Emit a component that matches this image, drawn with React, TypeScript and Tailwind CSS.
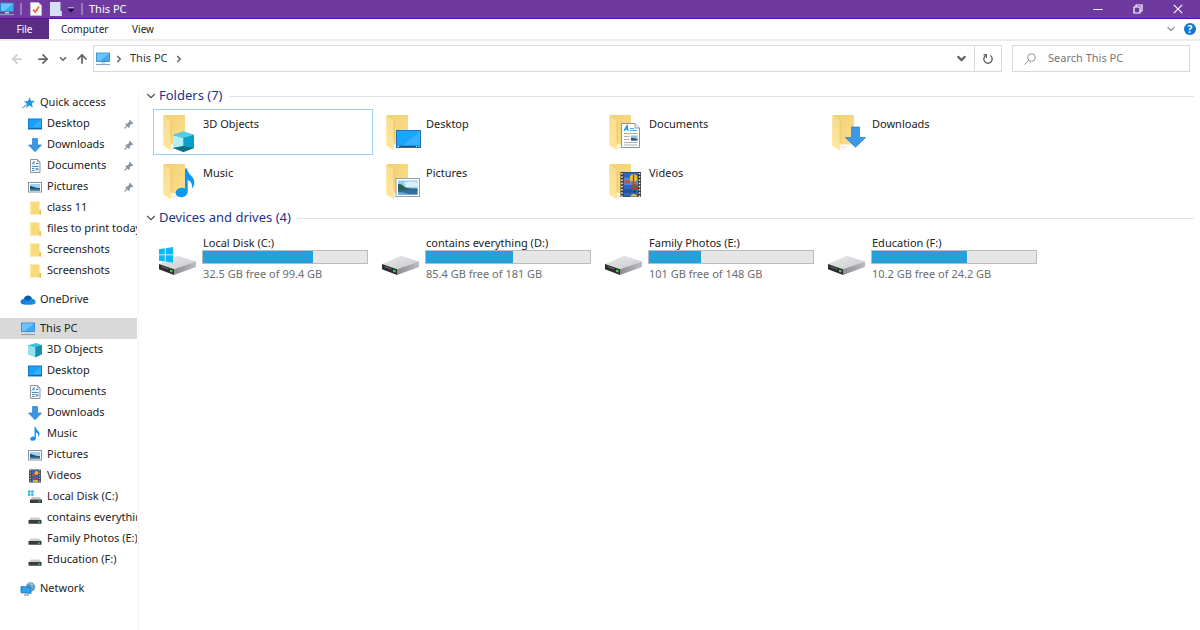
import type { ReactNode } from "react";
import { ChevronDown, ChevronRight, ArrowLeft, ArrowRight, ArrowUp } from "lucide-react";

/* Sidebar icons, 16x16 */

const MonitorIcon = () => (
  <svg width="16" height="16" viewBox="0 0 16 16" className="shrink-0">
    <rect x="1.5" y="2" width="13" height="8.5" fill="#3fa9f5" stroke="#2b86c5" strokeWidth=".8" />
    <path d="M2 2.5h12L5 10H2z" fill="#6cc4fb" />
    <path d="M6 11h4v1.500H6z" fill="#c3d3df" />
    <path d="M1 13.500h14" stroke="#8fa3b5" strokeWidth="1.200" />
  </svg>
);

const StarIcon = () => (
  <svg width="16" height="16" viewBox="0 0 16 16" className="shrink-0">
    <path d="M9.800 2l1 3.700 4.200.2-3.200 2.600 1.100 4-3.500-2.100-3.400 2.700 1.100-4.200L4 6.400l4-.4z" fill="#2196e8" />
    <path d="M2.500 13l4-3.500" stroke="#2b7cc0" />
  </svg>
);

const DesktopIcon = () => (
  <svg width="16" height="16" viewBox="0 0 16 16" className="shrink-0">
    <rect x="1.500" y="3" width="13" height="10" fill="#18a0fb" stroke="#1279cf" />
    <path d="M14 3.500V11L6 11z" fill="#35b0ff" />
    <path d="M1 12.500h14" stroke="#1565a8" />
  </svg>
);

const DownloadIcon = () => (
  <svg width="16" height="16" viewBox="0 0 16 16" className="shrink-0">
    <path d="M5.500 1.500h5v6.500h4L8 14.800 1.500 8h4z" fill="#3a96e4" stroke="#2b7fcb" strokeWidth=".7" />
  </svg>
);

const DocumentIcon = () => (
  <svg width="16" height="16" viewBox="0 0 16 16" className="shrink-0">
    <path d="M3.500 1.500h7l2.500 2.500v10.500H3.500z" fill="#fafafa" stroke="#8c959c" />
    <path d="M10.500 1.500v2.500H13" fill="none" stroke="#8c959c" strokeWidth=".8" />
    <path d="M5 6.500L7 3.500v3M9 5.500h2.500M5 8.500h6.500M5 10.500h2.500M5 12.500h2.500" stroke="#2f80c6" strokeWidth=".9" fill="none" />
    <path d="M8.500 10h3v2.500h-3z" fill="#7aa7cd" />
  </svg>
);

const PictureIcon = () => (
  <svg width="16" height="16" viewBox="0 0 16 16" className="shrink-0">
    <rect x="1.500" y="3.500" width="13" height="9.500" fill="#fff" stroke="#8b9298" />
    <rect x="3" y="5" width="10" height="6.500" fill="#9cd0f5" />
    <path d="M3 7c3 0 4 2 10 2v2.500H3z" fill="#2a5568" />
    <path d="M3 10.300h10v1.200H3z" fill="#3d83b8" />
  </svg>
);

const FolderIcon = () => (
  <svg width="16" height="16" viewBox="0 0 16 16" className="shrink-0">
    <path d="M3 1.500h9.500v8.500H14v4.500H3z" fill="#f8da7c" />
    <path d="M3 1.500l1.500 1v12L3 14z" fill="#fbe59a" />
    <path d="M12.500 10H14v4.500h-1.500z" fill="#e9bd4c" />
  </svg>
);

const CloudIcon = () => (
  <svg width="16" height="16" viewBox="0 0 16 16" className="shrink-0">
    <path d="M3.500 8C4 4.800 6 3.500 8 3.500c1.800 0 3.400 1 4 3l-3 5z" fill="#0a5cb0" />
    <path d="M4 12.500C1.800 12.500.6 11.200.6 9.700.6 8 2 6.900 3.700 7c1.300 0 2.800.8 4 2l4 3.500z" fill="#1481d8" />
    <path d="M4 12.500l7-5.500c2.200-.9 4.500.9 4.500 3 0 1.400-1.200 2.500-2.700 2.500z" fill="#1b8be4" />
  </svg>
);

const CubeIcon = () => (
  <svg width="16" height="16" viewBox="0 0 16 16" className="shrink-0">
    <path d="M1 3.500L9 1.200l6 2v8.800l-6 3.300-8-3z" fill="#20a9c7" />
    <path d="M1 3.500L8.500 5v10L1 12.300z" fill="#93e3ec" />
    <path d="M1 3.500L9 1.200l6 2L8.500 5z" fill="#42c6da" />
    <path d="M8.500 5L15 3.200V12l-6.500 3.300z" fill="#158fb4" />
  </svg>
);

const MusicIcon = () => (
  <svg width="16" height="16" viewBox="0 0 16 16" className="shrink-0">
    <path d="M7.500 1h1.200c.3 3 3.800 3.800 3.800 7 0 1.300-.6 2.300-1.300 3 .5-3-.8-4-2.300-4.500v5.800c0 1.500-1.300 2.500-3 2.500S3.200 14 3.200 12.900c0-1.400 1.500-2.400 3-2.400.5 0 1 .1 1.300.3z" fill="#1293ee" />
  </svg>
);

const VideoIcon = () => (
  <svg width="16" height="16" viewBox="0 0 16 16" className="shrink-0">
    <rect x="2" y="1.500" width="12" height="13" fill="#3c3c3c" />
    <rect x="4.500" y="2" width="7" height="12" fill="#2d63b8" />
    <circle cx="9.500" cy="5" r="2" fill="#e9bb28" />
    <path d="M5 6h3v1.800H5z" fill="#d8452f" />
    <path d="M7 9.500h4v2H7z" fill="#c33d2b" />
    <path d="M6 12h5v2H6z" fill="#e2b42a" />
    <path d="M3.200 2v12M12.800 2v12" stroke="#e2e2e2" strokeDasharray="1.300 1.300" />
  </svg>
);

const DriveIcon = () => (
  <svg width="16" height="16" viewBox="0 0 16 16" className="shrink-0">
    <path d="M4 7.500h8l2.500 3h-13z" fill="#c9cbcd" />
    <rect x="1.500" y="10" width="13" height="3.800" rx=".6" fill="#3a3d40" />
    <rect x="11" y="11.500" width="2" height="1.200" fill="#35d04c" />
  </svg>
);

const SystemDriveIcon = () => (
  <svg width="16" height="16" viewBox="0 0 16 16" className="shrink-0">
    <path d="M1 1.500h2.400v2.200H1zM4.200 1.500h2.400v2.200H4.200zM1 4.500h2.400v2.200H1zM4.200 4.500h2.400v2.200H4.200z" fill="#12aeea" />
    <path d="M5 8h7.500l2 2.700H3.500z" fill="#c4c6c8" />
    <rect x="3" y="10.400" width="12" height="3.600" rx=".6" fill="#3a3d40" />
    <rect x="11.500" y="11.800" width="2" height="1.200" fill="#35d04c" />
  </svg>
);

const NetworkIcon = () => (
  <svg width="16" height="16" viewBox="0 0 16 16" className="shrink-0">
    <circle cx="10.500" cy="6" r="4.700" fill="#5f95bf" />
    <path d="M8 2.500c2 1 5 0 6 2M10.500 1.500c2 3 2 6 0 9" stroke="#b7d4ea" strokeWidth=".8" fill="none" />
    <path d="M1 5.500l10 .8v6L1 11.800z" fill="#2fa2ee" stroke="#1b6fb0" strokeWidth=".8" />
    <path d="M4 14h5" stroke="#7f95a8" strokeWidth="1.200" />
  </svg>
);

const PinIcon = () => (
  <svg width="10" height="10" viewBox="0 0 10 10" className="shrink-0">
    <path d="M5.500.500l4 4-1.200.5-.8-.2L5.700 6.600l.1 1.600-.9.800-3.700-3.800.8-.8 1.600.1L5.400 2.600l-.3-.9z" fill="#8793a0" />
    <path d="M3.300 6.700L.5 9.500" stroke="#8793a0" strokeWidth="1.100" />
  </svg>
);

/* Folder tiles: a shared open folder with an overlay on its corner */

const FolderTileIcon = ({ children }: { children: ReactNode }) => (
  <svg width="48" height="46" viewBox="0 0 48 46" className="shrink-0">
    <defs>
      <linearGradient id="folder-back" x1="0" y1="0" x2="1" y2="1">
        <stop offset="0" stopColor="#f2cf72" />
        <stop offset="1" stopColor="#fbdf8c" />
      </linearGradient>
      <linearGradient id="folder-front" x1="0" y1="0" x2="0" y2="1">
        <stop offset="0" stopColor="#f8dc8e" />
        <stop offset="1" stopColor="#ffe79a" />
      </linearGradient>
    </defs>
    <path d="M18 37h9l-8 4z" fill="#eeeeee" />
    <path d="M11 6h21v29.500H17z" fill="url(#folder-back)" />
    <path d="M10.200 6.300L18 12v29.500l-7.800-5z" fill="url(#folder-front)" />
    <path d="M18 12v22" stroke="#e3b95b" strokeWidth=".6" />
    {children}
  </svg>
);

const CubeOverlay = () => (
  <>
    <path d="M20 26L30.500 22.500 41 26v13L30.500 43 20 39z" fill="#1ab1cf" />
    <path d="M20 26L30.500 29v8L20 39z" fill="#b4eff4" />
    <path d="M20 26L30.500 22.500 41 26 30.500 29z" fill="#50cfe0" />
    <path d="M30.500 29L41 26v13l-10.500-2z" fill="#0b9fc9" />
    <path d="M20 39l10.500-2L41 39 30.500 43z" fill="#0f6f83" />
  </>
);

const MusicOverlay = () => (
  <path
    d="M32 10.500h2c.4 5.500 7.300 7.500 7.300 14 0 2.500-1 4.500-2.300 6 .6-5-1.500-7.500-4.300-8.500v11.700c0 3-3 5.500-6.500 5.500-3 0-5.500-1.700-5.500-4.200 0-3 3-5.200 6.500-5.200 1 0 2 .2 2.800.6z"
    fill="#0c97f5"
  />
);

const DesktopOverlay = () => (
  <>
    <rect x="20.500" y="21.500" width="24" height="17" fill="#1aa5ff" stroke="#1a76b8" />
    <path d="M44 22v14L28 36z" fill="#35b1ff" />
    <path d="M20.500 37.500h24" stroke="#0e5c98" strokeWidth="1.400" />
    <path d="M21.500 37.500H23M40 37.500h1M42.500 37.500h1" stroke="#dcefff" />
  </>
);

const DocumentOverlay = () => (
  <>
    <path d="M22.500 14.500H36l4.500 4.500v19.500h-18z" fill="#fdfdfd" stroke="#8d9498" />
    <path d="M36 14.500V19h4.500" fill="#e8ebed" stroke="#8d9498" strokeWidth=".8" />
    <path d="M25 22l3-5.500 1 5.500M26 20.200h2.700" stroke="#168be0" strokeWidth="1.200" fill="none" />
    <path d="M31 19.500h4M31 21.500h7" stroke="#4aa7e8" />
    <path d="M25 24.500h13.500M25 27.500h5.500M25 30.500h5.500M25 33.500h13.500M25 36h13.500" stroke="#a9b1b8" />
    <rect x="32" y="26.500" width="6.500" height="4.800" fill="#8bbfe4" />
    <path d="M32 29c3-.5 4 1 6.500 1v1.500H32z" fill="#2a4d60" />
  </>
);

const DownloadOverlay = () => (
  <path d="M29.500 18h8v10.500h6.200L33.500 38.300 23.300 28.500h6.200z" fill="#3d98e8" stroke="#2a7dca" strokeWidth=".7" />
);

const PictureOverlay = () => (
  <>
    <rect x="20" y="20.500" width="23.500" height="18" fill="#fff" stroke="#9aa0a4" />
    <rect x="22" y="22.500" width="19.500" height="14" fill="#8fccf6" />
    <path d="M28 24.500c4-1.500 9-1 13.500-.5v5H30z" fill="#d9effc" />
    <path d="M22 26.500c2-1 4 0 6 2s8 2 13.500 2V33H22z" fill="#2f6152" />
    <path d="M22 32.500c6-.5 14-1.500 19.500-.5v4.500H22z" fill="#2f6ea6" />
    <path d="M22 34c5 0 8 1 12 2.500H22z" fill="#6ea9d4" />
  </>
);

const VideoOverlay = () => (
  <>
    <rect x="21.500" y="14" width="20.500" height="25" fill="#343434" />
    <rect x="24.500" y="14.500" width="14.500" height="24" fill="#2f66c2" />
    <path d="M25 20c4-2 8 3 14 1v6H25z" fill="#4f8bdc" />
    <path d="M24.500 31c3-1 5 2 9 0v4h-9z" fill="#2452a0" />
    <circle cx="34.500" cy="20" r="3.800" fill="#eec22d" />
    <path d="M33.800 16.500h1.400v7.500h-1.400z" fill="#6b5a20" />
    <path d="M33 24h3l-.8 2h-1.400z" fill="#d73c2b" />
    <path d="M25 22.500h6l-1 3h-4z" fill="#e0452f" />
    <circle cx="35.500" cy="29" r="3" fill="#ca3527" />
    <path d="M33 28.500h5v1.500h-5z" fill="#2a8044" />
    <path d="M34.500 32.500h2v2h-2z" fill="#20242b" />
    <path d="M31 38.500a4 4 0 0 1 7.500 0z" fill="#eec22d" />
    <path d="M23 15v24M40.500 15v24" stroke="#f0f0f0" strokeWidth="1.600" strokeDasharray="1.600 1.600" />
  </>
);

const DriveTileIcon = ({ system }: { system?: boolean }) => (
  <svg width="48" height="46" viewBox="0 0 48 46" className="shrink-0">
    <defs>
      <linearGradient id="drive-top" x1="0" y1="0" x2="1" y2="1">
        <stop offset="0" stopColor="#e9eaec" />
        <stop offset="1" stopColor="#c9cacd" />
      </linearGradient>
      <linearGradient id="drive-side" x1="0" y1="0" x2="1" y2="0">
        <stop offset="0" stopColor="#8c8d90" />
        <stop offset="1" stopColor="#bcbdc0" />
      </linearGradient>
    </defs>
    <path d="M6 29L25 20.700l18 5.800L21 34.500z" fill="url(#drive-top)" />
    <path d="M21 34.300l22-7.800V32L21 40z" fill="url(#drive-side)" />
    <path d="M6 29l15 5.300V40L6 34.300z" fill="#2b2c2e" />
    <path d="M8.500 31.700l7 2.500" stroke="#5b5d60" strokeWidth="1.300" />
    <path d="M17 34.500l2.500.8v2.200l-2.500-.8z" fill="#3bdb3f" />
    {system && (
      <path d="M6 14.200l5.800-.9v6.200H6zM12.600 13.200l7.400-1.200v7.500h-7.400zM6 20.300h5.800v6.200L6 25.700zM12.600 20.300H20V27.700l-7.400-1.100z" fill="#0db8f2" />
    )}
  </svg>
);

type TreeItem = { label: string; icon: ReactNode; pinned?: boolean };
type TreeGroup = { root: TreeItem; active?: boolean; items: TreeItem[] };

const tree: TreeGroup[] = [
  {
    root: { label: "Quick access", icon: <StarIcon /> },
    items: [
      { label: "Desktop", icon: <DesktopIcon />, pinned: true },
      { label: "Downloads", icon: <DownloadIcon />, pinned: true },
      { label: "Documents", icon: <DocumentIcon />, pinned: true },
      { label: "Pictures", icon: <PictureIcon />, pinned: true },
      { label: "class 11", icon: <FolderIcon /> },
      { label: "files to print today", icon: <FolderIcon /> },
      { label: "Screenshots", icon: <FolderIcon /> },
      { label: "Screenshots", icon: <FolderIcon /> },
    ],
  },
  { root: { label: "OneDrive", icon: <CloudIcon /> }, items: [] },
  {
    root: { label: "This PC", icon: <MonitorIcon /> },
    active: true,
    items: [
      { label: "3D Objects", icon: <CubeIcon /> },
      { label: "Desktop", icon: <DesktopIcon /> },
      { label: "Documents", icon: <DocumentIcon /> },
      { label: "Downloads", icon: <DownloadIcon /> },
      { label: "Music", icon: <MusicIcon /> },
      { label: "Pictures", icon: <PictureIcon /> },
      { label: "Videos", icon: <VideoIcon /> },
      { label: "Local Disk (C:)", icon: <SystemDriveIcon /> },
      { label: "contains everything (D:)", icon: <DriveIcon /> },
      { label: "Family Photos (E:)", icon: <DriveIcon /> },
      { label: "Education (F:)", icon: <DriveIcon /> },
    ],
  },
  { root: { label: "Network", icon: <NetworkIcon /> }, items: [] },
];

const folders = [
  { name: "3D Objects", overlay: <CubeOverlay />, selected: true },
  { name: "Desktop", overlay: <DesktopOverlay /> },
  { name: "Documents", overlay: <DocumentOverlay /> },
  { name: "Downloads", overlay: <DownloadOverlay /> },
  { name: "Music", overlay: <MusicOverlay /> },
  { name: "Pictures", overlay: <PictureOverlay /> },
  { name: "Videos", overlay: <VideoOverlay /> },
];

const drives = [
  { name: "Local Disk (C:)", free: "32.5 GB free of 99.4 GB", used: 67, system: true },
  { name: "contains everything (D:)", free: "85.4 GB free of 181 GB", used: 53 },
  { name: "Family Photos (E:)", free: "101 GB free of 148 GB", used: 32 },
  { name: "Education (F:)", free: "10.2 GB free of 24.2 GB", used: 58 },
];

function TitleBar() {
  return (
    <header className="flex h-[19px] items-center border-b border-[#5c0a9c] bg-[#6f3a9f] text-white">
      <div className="-ml-px flex w-[90px] shrink-0 items-center">
        <MonitorIcon />
        <span className="ml-[5px] h-3 w-[2px] bg-[#9a78bb]" />
        <button aria-label="Properties" className="ml-2">
          <svg width="12" height="14" viewBox="0 0 12 14">
            <path d="M.5.500h8l3 3v10H.5z" fill="#f7f7f7" stroke="#c9c9d2" strokeWidth=".6" />
            <path d="M8.500.500v3h3" fill="#dedee6" />
            <path d="M3 7.500l2.200 2.500L9 4.500" stroke="#ee6a3c" strokeWidth="1.700" fill="none" />
          </svg>
        </button>
        <button aria-label="New folder" className="ml-2">
          <svg width="12" height="14" viewBox="0 0 12 14">
            <path d="M0 0h10.500v9H12v5H0z" fill="#d7e0f3" />
            <path d="M10.500 9H12v5h-1.500z" fill="#bccbe6" />
          </svg>
        </button>
        <button aria-label="Customize toolbar" className="ml-[5px]">
          <svg width="8" height="8" viewBox="0 0 8 8">
            <path d="M1 2.500h6" stroke="#b79bd0" />
            <path d="M.5 4h7L4 7.500z" fill="#1d0f2c" />
          </svg>
        </button>
        <span className="ml-[6px] h-3 w-[2px] bg-[#9a78bb]" />
      </div>
      <h1 className="flex-1">This PC</h1>
      <div className="mr-[2px] flex">
        <button aria-label="Minimize" className="flex w-10 justify-center">
          <svg width="10" height="10" viewBox="0 0 10 10"><path d="M.500 5.500h9" stroke="#fff" /></svg>
        </button>
        <button aria-label="Restore" className="flex w-10 justify-center">
          <svg width="10" height="10" viewBox="0 0 10 10" fill="none" stroke="#fff">
            <path d="M1 3h6v6H1zM3 3V1h6v6H7" strokeWidth="1.200" />
          </svg>
        </button>
        <button aria-label="Close" className="flex w-10 justify-center">
          <svg width="10" height="10" viewBox="0 0 10 10"><path d="M.800.800l8.400 8.400M9.200.800L.800 9.200" stroke="#fff" strokeWidth="1.100" /></svg>
        </button>
      </div>
    </header>
  );
}

function Ribbon() {
  return (
    <nav className="flex h-[22px] items-stretch border-b-2 border-[#ececec] text-[10px]">
      <button className="w-[49px] bg-[#5a2c84] text-white">File</button>
      <button className="ml-3 w-[46px]">Computer</button>
      <button className="ml-3 w-12">View</button>
      <button aria-label="Expand ribbon" className="ml-auto text-[#999]">
        <ChevronDown size={12} strokeWidth={3} />
      </button>
      <button aria-label="Help" className="mr-1 ml-[7px] flex items-center">
        <span className="flex size-3 items-center justify-center rounded-full bg-[#0e78d4] font-bold text-white">?</span>
      </button>
    </nav>
  );
}

function AddressBar() {
  return (
    <div className="flex items-center pt-1 pr-[10px] text-[#666]">
      <div className="flex w-[93px] items-center">
        <button aria-label="Back" className="ml-[10px] text-[#ccc]"><ArrowLeft size={14} strokeWidth={3} /></button>
        <button aria-label="Forward" className="ml-3"><ArrowRight size={14} strokeWidth={3} /></button>
        <button aria-label="Recent locations" className="ml-2"><ChevronDown size={10} strokeWidth={4} /></button>
        <button aria-label="Up" className="ml-[7px]"><ArrowUp size={14} strokeWidth={3} /></button>
      </div>
      <div className="flex h-[27px] flex-1 items-stretch border border-[#d9d9d9]">
        <div className="flex flex-1 items-center pl-px">
          <MonitorIcon />
          <ChevronRight size={10} strokeWidth={4} className="ml-[3px]" />
          <button className="ml-[6px] text-[#333]">This PC</button>
          <ChevronRight size={10} strokeWidth={4} className="ml-[6px]" />
        </div>
        <button aria-label="Previous locations" className="flex w-[26px] items-center justify-center">
          <ChevronDown size={13} strokeWidth={4} />
        </button>
        <button aria-label="Refresh" className="flex w-[27px] items-center justify-center border-l border-[#d9d9d9]">
          <svg width="12" height="12" viewBox="0 0 12 12" fill="none" stroke="#666" strokeWidth="1.400">
            <path d="M8.300 2.500a4.200 4.200 0 1 1-4.600 0" />
            <path d="M3.500 5V1.700H.8" transform="translate(.8 0)" />
          </svg>
        </button>
      </div>
      <label className="ml-[10px] flex h-[27px] w-[178px] items-center border border-[#d9d9d9] pl-[11px]">
        <svg width="12" height="12" viewBox="0 0 12 12" fill="none" stroke="#8f8f8f" className="shrink-0">
          <circle cx="7.500" cy="4.500" r="3.800" />
          <path d="M4.800 7.200L.5 11.500" />
        </svg>
        <input
          aria-label="Search This PC"
          placeholder="Search This PC"
          className="ml-3 w-full min-w-0 outline-none placeholder:text-[#767676]"
        />
      </label>
    </div>
  );
}

function TreeRow({ item, root, active }: { item: TreeItem; root?: boolean; active?: boolean }) {
  return (
    <button
      className={`flex h-[21px] w-full items-center gap-1 overflow-hidden text-left ${root ? "pl-5" : "pl-[27px]"} ${
        active ? "bg-[#d9d9d9]" : ""
      }`}
    >
      {item.icon}
      <span className="flex-1 whitespace-nowrap">{item.label}</span>
      {item.pinned && <span className="pr-[3px]"><PinIcon /></span>}
    </button>
  );
}

function Sidebar() {
  return (
    <aside className="flex w-[139px] shrink-0 flex-col gap-2 border-r border-[#f4f4f4] pr-px">
      {tree.map((group) => (
        <div key={group.root.label}>
          <TreeRow item={group.root} root active={group.active} />
          {group.items.map((item, i) => (
            <TreeRow key={i} item={item} />
          ))}
        </div>
      ))}
    </aside>
  );
}

function Section({ title, children }: { title: string; children: ReactNode }) {
  return (
    <section>
      <h2 className="flex h-5 items-center text-[13px] text-[#1e3287]">
        <ChevronDown size={14} strokeWidth={2} className="mr-px text-[#555]" />
        {title}
        <span className="ml-[6px] h-px flex-1 bg-[#e2e2e2]" />
      </h2>
      {children}
    </section>
  );
}

export default function App() {
  return (
    <div className="flex min-h-screen flex-col bg-white font-['Noto_Sans',sans-serif] text-[11px] text-[#222]">
      <TitleBar />
      <Ribbon />
      <AddressBar />
      <div className="flex flex-1 pt-5">
        <Sidebar />
        <main className="-mt-[6px] flex flex-1 flex-col gap-1 pr-[6px] pl-[5px]">
          <Section title="Folders (7)">
            <div className="mt-[3px] ml-[9px] grid grid-cols-[repeat(auto-fill,220px)] gap-[3px]">
              {folders.map((f) => (
                <button
                  key={f.name}
                  className={`flex h-[46px] items-start gap-[2px] text-left outline-1 -outline-offset-1 ${
                    f.selected ? "outline-[#99d1ff]" : "outline-transparent"
                  }`}
                >
                  <FolderTileIcon>{f.overlay}</FolderTileIcon>
                  <span className="pt-[7px]">{f.name}</span>
                </button>
              ))}
            </div>
          </Section>
          <Section title="Devices and drives (4)">
            <div className="mt-[7px] ml-[9px] grid grid-cols-[repeat(auto-fill,220px)] gap-[3px]">
              {drives.map((d) => (
                <button key={d.name} className="flex h-[46px] items-start gap-px text-left">
                  <DriveTileIcon system={d.system} />
                  <span className="w-[166px]">
                    <span className="block pl-px leading-[15px]">{d.name}</span>
                    <span className="block h-[14px] border border-[#bcbcbc] bg-[#e6e6e6]">
                      <span className="block h-full bg-[#26a0da]" style={{ width: `${d.used}%` }} />
                    </span>
                    <span className="block pl-px leading-5 text-[#6d6d6d]">{d.free}</span>
                  </span>
                </button>
              ))}
            </div>
          </Section>
        </main>
      </div>
    </div>
  );
}
